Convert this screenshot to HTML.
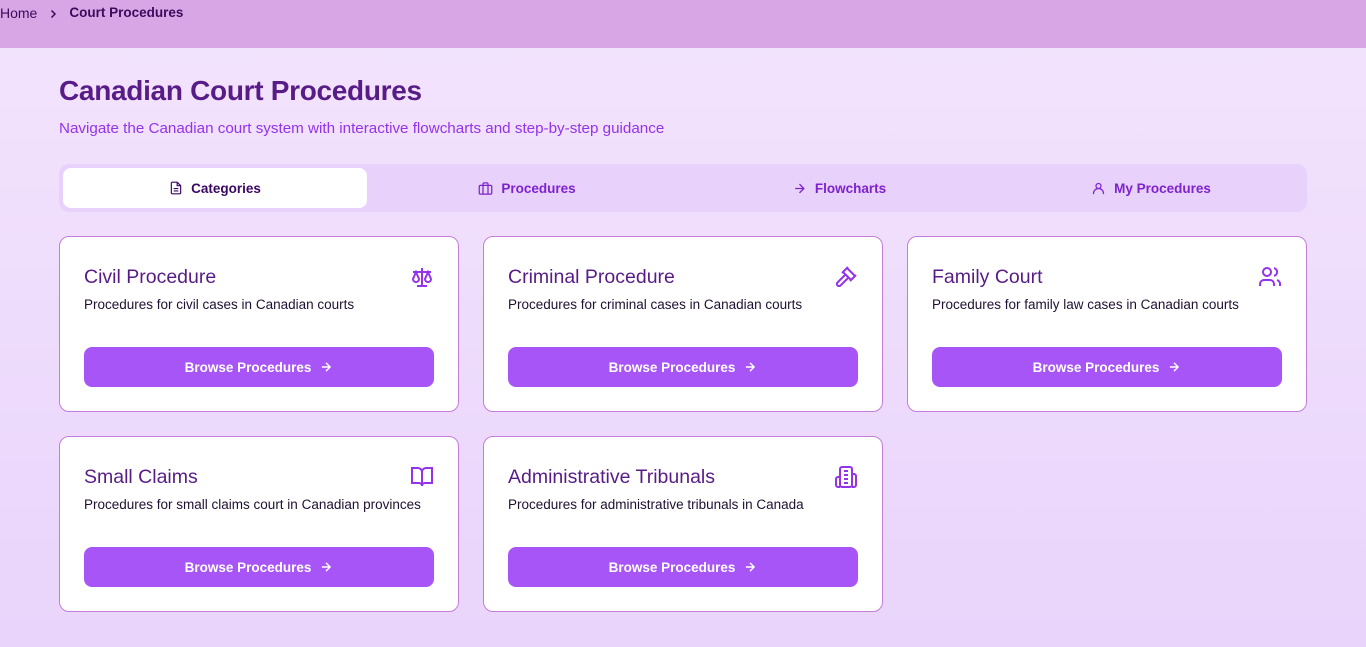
<!DOCTYPE html>
<html><head><style>
*{box-sizing:border-box;margin:0;padding:0}
body{width:1366px;height:647px;overflow:hidden;font-family:"Liberation Sans",sans-serif;background:linear-gradient(180deg,#f3e4fd,#e9d4fb);position:relative}
.top{height:48px;background:#d8a6e4;font-size:14px;color:#3b0a5e;padding-top:5px;display:flex;align-items:flex-start;gap:0}
.top b{font-weight:bold;font-size:13.5px}
.top svg{margin:2px 10px 0 10px}
h1{position:absolute;left:59px;top:75px;font-size:28px;color:#581c87;font-weight:bold;letter-spacing:-0.3px}
.sub{position:absolute;left:59px;top:120px;font-size:15.2px;color:#9333ea}
.tabs{position:absolute;left:59px;top:164px;width:1248px;height:48px;background:#e8d2fb;border-radius:10px}
.tab{position:absolute;top:4px;height:40px;width:304px;display:flex;align-items:center;justify-content:center;gap:8px;font-size:13.5px;font-weight:bold;color:#7e22ce}
.tab.act{background:#fff;border-radius:8px;color:#3b0764}
.card{position:absolute;width:400px;height:176px;background:#fff;border:1px solid #c57ddb;border-radius:10px}
.card h2{position:absolute;left:24px;top:29px;font-size:19.5px;font-weight:normal;color:#581c87}
.card p{position:absolute;left:24px;top:60px;font-size:13.5px;color:#1f1033}
.card .ic{position:absolute;right:24px;top:28px}
.btn{position:absolute;left:24px;top:110px;width:350px;height:40px;background:#a855f7;border-radius:8px;color:#fff;font-size:13.5px;font-weight:bold;display:flex;align-items:center;justify-content:center;gap:8px}
svg{display:block}
</style></head><body>
<div class="top">Home<svg width="12" height="14" viewBox="0 0 24 24" fill="none" stroke="#3b0a5e" stroke-width="3"><path d="M9 5l7 7-7 7"/></svg><b>Court Procedures</b></div>
<h1>Canadian Court Procedures</h1>
<div class="sub">Navigate the Canadian court system with interactive flowcharts and step-by-step guidance</div>
<div class="tabs">
<div class="tab act" style="left:4px"><svg width="14" height="14" viewBox="0 0 24 24" fill="none" stroke="currentColor" stroke-width="2"><path d="M14 2H6a2 2 0 0 0-2 2v16a2 2 0 0 0 2 2h12a2 2 0 0 0 2-2V8z M14 2v6h6 M8 13h8 M8 17h8"/></svg>Categories</div>
<div class="tab" style="left:316px"><svg width="15" height="15" viewBox="0 0 24 24" fill="none" stroke="currentColor" stroke-width="2"><rect x="2" y="7" width="20" height="14" rx="2"/><path d="M16 21V5a2 2 0 0 0-2-2h-4a2 2 0 0 0-2 2v16"/></svg>Procedures</div>
<div class="tab" style="left:628px"><svg width="15" height="15" viewBox="0 0 24 24" fill="none" stroke="currentColor" stroke-width="2"><path d="M5 12h14M12 5l7 7-7 7"/></svg>Flowcharts</div>
<div class="tab" style="left:940px"><svg width="15" height="15" viewBox="0 0 24 24" fill="none" stroke="currentColor" stroke-width="2"><circle cx="12" cy="8" r="4"/><path d="M4 21v-1a7 7 0 0 1 16 0v1"/></svg>My Procedures</div>
</div>

<div class="card" style="left:59px;top:236px"><h2>Civil Procedure</h2><p>Procedures for civil cases in Canadian courts</p>
<svg class="ic" width="24" height="24" viewBox="0 0 24 24" fill="none" stroke="#9333ea" stroke-width="2"><path d="M12 3v17M7 21h10M3 7h18M6 7l-3 7a3 3 0 0 0 6 0zM18 7l-3 7a3 3 0 0 0 6 0z"/></svg>
<div class="btn">Browse Procedures <svg width="14" height="14" viewBox="0 0 24 24" fill="none" stroke="#fff" stroke-width="2.5"><path d="M5 12h14M12 5l7 7-7 7"/></svg></div></div>
<div class="card" style="left:483px;top:236px"><h2>Criminal Procedure</h2><p>Procedures for criminal cases in Canadian courts</p>
<svg class="ic" width="24" height="24" viewBox="0 0 24 24" fill="none" stroke="#9333ea" stroke-width="2"><path d="M14 13l-7.5 7.5a2.1 2.1 0 0 1-3-3L11 10M16 16l6-6M8 8l6-6M9 7l8 8M21 11l-8-8"/></svg>
<div class="btn">Browse Procedures <svg width="14" height="14" viewBox="0 0 24 24" fill="none" stroke="#fff" stroke-width="2.5"><path d="M5 12h14M12 5l7 7-7 7"/></svg></div></div>
<div class="card" style="left:907px;top:236px"><h2>Family Court</h2><p>Procedures for family law cases in Canadian courts</p>
<svg class="ic" width="24" height="24" viewBox="0 0 24 24" fill="none" stroke="#9333ea" stroke-width="2"><circle cx="9" cy="7" r="4"/><path d="M16 21v-2a4 4 0 0 0-4-4H6a4 4 0 0 0-4 4v2M16 3.1a4 4 0 0 1 0 7.8M22 21v-2a4 4 0 0 0-3-3.9"/></svg>
<div class="btn">Browse Procedures <svg width="14" height="14" viewBox="0 0 24 24" fill="none" stroke="#fff" stroke-width="2.5"><path d="M5 12h14M12 5l7 7-7 7"/></svg></div></div>
<div class="card" style="left:59px;top:436px"><h2>Small Claims</h2><p>Procedures for small claims court in Canadian provinces</p>
<svg class="ic" width="24" height="24" viewBox="0 0 24 24" fill="none" stroke="#9333ea" stroke-width="2"><path d="M2 3h6a4 4 0 0 1 4 4v14a3 3 0 0 0-3-3H2zM22 3h-6a4 4 0 0 0-4 4v14a3 3 0 0 1 3-3h7z"/></svg>
<div class="btn">Browse Procedures <svg width="14" height="14" viewBox="0 0 24 24" fill="none" stroke="#fff" stroke-width="2.5"><path d="M5 12h14M12 5l7 7-7 7"/></svg></div></div>
<div class="card" style="left:483px;top:436px"><h2>Administrative Tribunals</h2><p>Procedures for administrative tribunals in Canada</p>
<svg class="ic" width="24" height="24" viewBox="0 0 24 24" fill="none" stroke="#9333ea" stroke-width="2"><rect x="6" y="2" width="12" height="20" rx="2"/><path d="M6 12H4a2 2 0 0 0-2 2v6a2 2 0 0 0 2 2h2M18 9h2a2 2 0 0 1 2 2v9a2 2 0 0 1-2 2h-2M10 6h4M10 10h4M10 14h4M10 18h4"/></svg>
<div class="btn">Browse Procedures <svg width="14" height="14" viewBox="0 0 24 24" fill="none" stroke="#fff" stroke-width="2.5"><path d="M5 12h14M12 5l7 7-7 7"/></svg></div></div>
</body></html>
